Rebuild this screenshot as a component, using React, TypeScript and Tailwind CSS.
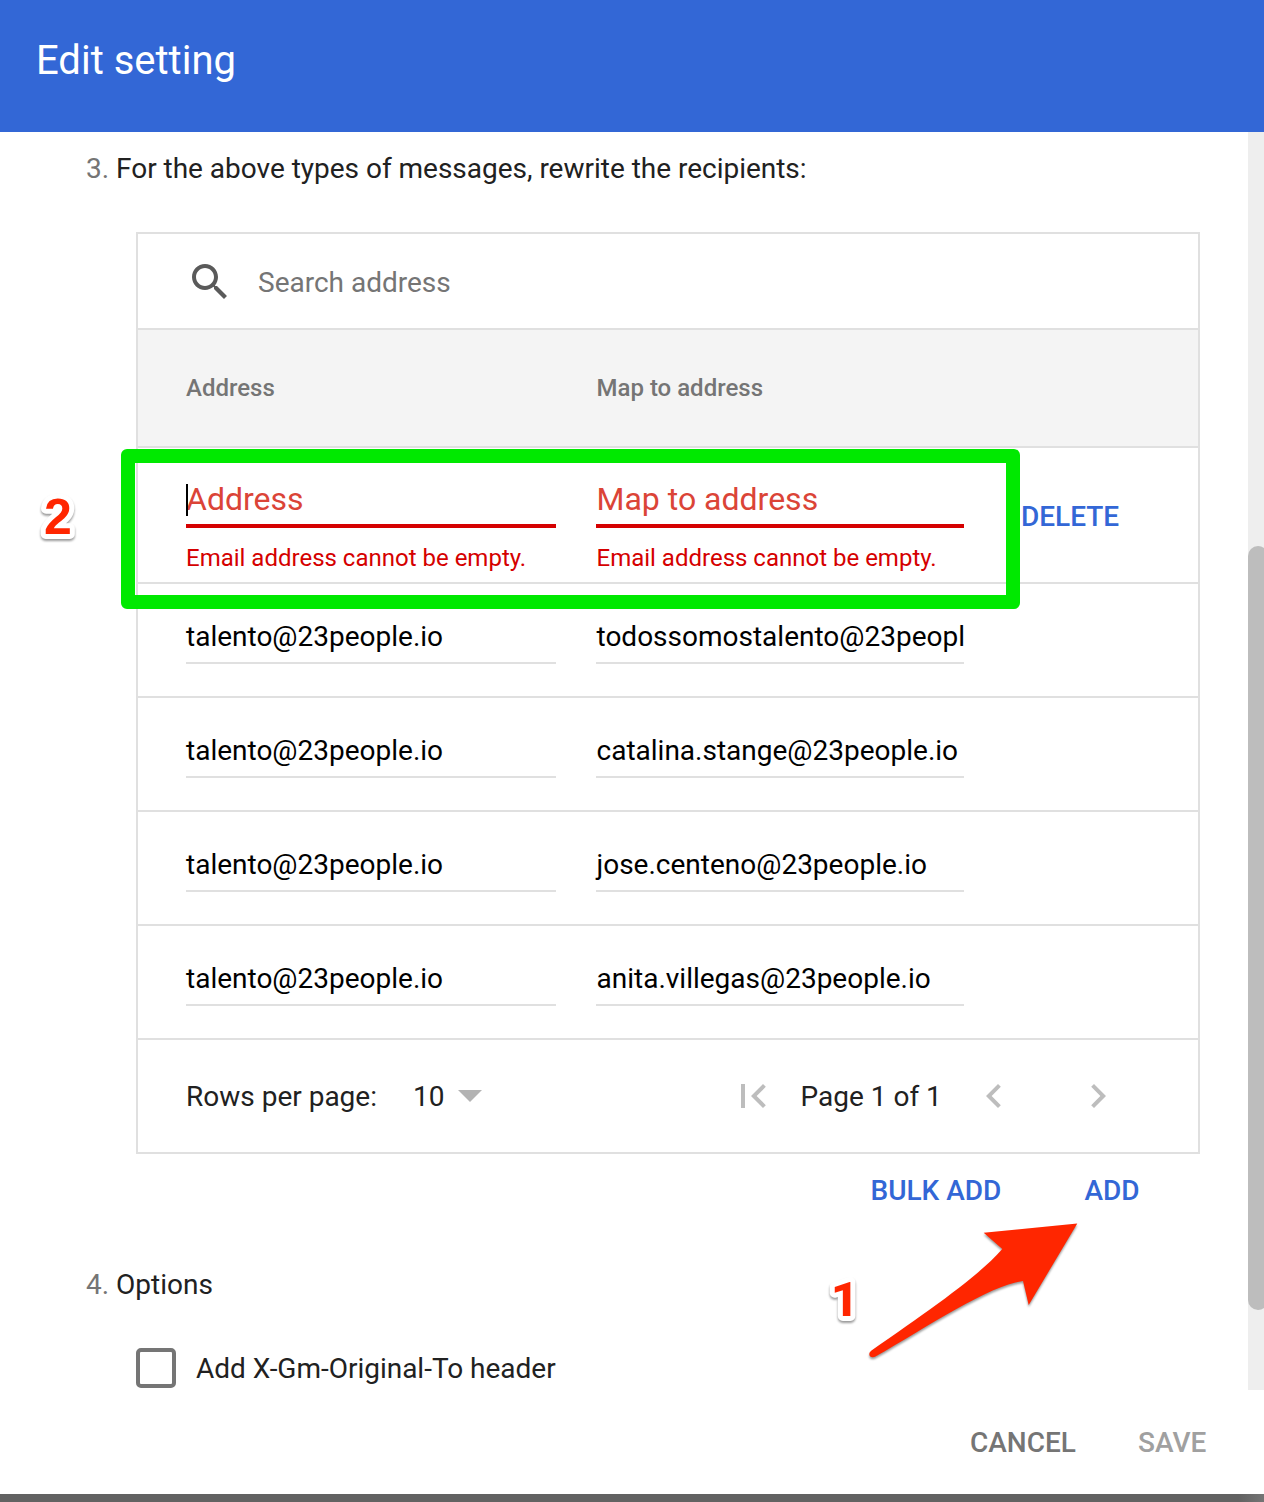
import React from "react";

const rows = [
  "todossomostalento@23peopl",
  "catalina.stange@23people.io",
  "jose.centeno@23people.io",
  "anita.villegas@23people.io",
];

function Icon({ d, className }: { d: string; className: string }) {
  return (
    <svg viewBox="0 0 24 24" className={`size-12 shrink-0 fill-current ${className}`}>
      <path d={d} />
    </svg>
  );
}

function Field({ value, className }: { value: string; className: string }) {
  return (
    <div className={`h-[80px] border-b-2 border-[#e0e0e0] pt-[33px] leading-10 text-black ${className}`}>
      {value}
    </div>
  );
}

function ErrorField({ label, caret, className }: { label: string; caret?: boolean; className: string }) {
  return (
    <div className={className}>
      <div className="relative h-20 border-b-4 border-[#d50000] pt-[31px] text-[32px] leading-10 text-[#db4437]">
        {caret && <span className="absolute top-9 left-0 h-8 w-0.5 bg-black" />}
        <span className={caret ? "" : "pl-[0.5px]"}>{label}</span>
      </div>
      <div className="pt-[14px] text-2xl leading-8 text-[#d50000]">
        <span className={caret ? "" : "pl-[0.5px]"}>Email address cannot be empty.</span>
      </div>
    </div>
  );
}

function Marker({ text, className }: { text: string; className: string }) {
  return (
    <svg viewBox="0 0 60 60" className={`absolute size-[60px] drop-shadow-[0_2px_1px_rgba(0,0,0,0.4)] ${className}`}>
      <text
        x="30"
        y="48"
        textAnchor="middle"
        strokeLinejoin="round"
        className="fill-[#ff2600] stroke-white stroke-[10px] [paint-order:stroke_fill]"
      >
        {text}
      </text>
    </svg>
  );
}

export default function App() {
  return (
    <div className="relative flex h-[1502px] w-[1264px] flex-col overflow-hidden bg-white font-['Roboto',sans-serif] text-[28px] whitespace-nowrap text-[#212121]">
      <header className="h-[132px] shrink-0 bg-[#3367d6] pt-[37px] pl-9 text-[40px] leading-[48px] text-white">Edit setting</header>

      <div className="flex h-[1258px] shrink-0">
        <main className="w-[1248px] shrink-0">
          <div className="flex h-[100px] pt-[17px] pl-[86px] leading-10">
            <span className="w-[30px] text-[#757575]">3.</span>
            <span className="tracking-[-0.015px]">For the above types of messages, rewrite the recipients:</span>
          </div>

          <section className="ml-[136px] w-[1064px] border-2 border-[#e0e0e0]">
            <div className="flex h-24 border-b-2 border-[#e0e0e0] pt-6 pl-12">
              <Icon
                className="text-[#5a5a5a]"
                d="M15.5 14h-.79l-.28-.27C15.41 12.59 16 11.11 16 9.5 16 5.91 13.09 3 9.5 3S3 5.91 3 9.5 5.91 16 9.5 16c1.61 0 3.09-.59 4.23-1.57l.27.28v.79l5 4.99L20.49 19l-4.99-5zm-6 0C7.01 14 5 11.99 5 9.5S7.01 5 9.5 5 14 7.01 14 9.5 11.99 14 9.5 14z"
              />
              <span className="pt-[5px] pl-6 leading-10 text-[#757575]">Search address</span>
            </div>

            <div className="flex h-[118px] items-center border-b-2 border-[#e0e0e0] bg-[#f4f4f4] pl-12 text-2xl font-medium text-[#757575]">
              <span className="w-[410.5px]">Address</span>
              <span>Map to address</span>
            </div>

            <div className="flex h-[136px] border-b-2 border-[#e0e0e0] pl-12">
              <ErrorField label="Address" caret className="w-[370px]" />
              <ErrorField label="Map to address" className="ml-10 w-[368px]" />
              <button className="ml-[57px] h-[136px] pt-0.5 leading-10 font-medium text-[#3367d6]">DELETE</button>
            </div>

            {rows.map((r) => (
              <div key={r} className="flex h-[114px] border-b-2 border-[#e0e0e0] pl-12">
                <Field value="talento@23people.io" className="w-[370px]" />
                <Field value={r} className="ml-10 w-[368px] pl-[0.5px]" />
              </div>
            ))}

            <div className="flex h-28 items-center pl-12">
              <span className="w-[227px] pt-0.5">Rows per page:</span>
              <span className="w-[45px] pt-0.5">10</span>
              <svg viewBox="0 0 24 12" className="h-3 w-6 fill-[#b3b3b3]">
                <path d="M0 0h24L12 12z" />
              </svg>
              <Icon className="ml-[246.5px] text-[#bdbdbd]" d="M18.41 16.59L13.82 12l4.59-4.59L17 6l-6 6 6 6zM6 6h2v12H6z" />
              <span className="ml-6 w-[169.5px] pt-0.5">Page 1 of 1</span>
              <Icon className="text-[#bdbdbd]" d="M15.41 7.41L14 6l-6 6 6 6 1.41-1.41L10.83 12z" />
              <Icon className="ml-14 text-[#bdbdbd]" d="M10 6L8.59 7.41 13.17 12l-4.58 4.59L10 18l6-6z" />
            </div>
          </section>

          <div className="flex h-[94px] pt-[17px] pl-[870.5px] leading-10 font-medium text-[#3367d6]">
            <button className="h-10 w-[214px] text-left">BULK ADD</button>
            <button className="h-10">ADD</button>
          </div>

          <div className="flex h-[100px] pt-[17px] pl-[86px] leading-10">
            <span className="w-[30px] text-[#757575]">4.</span>
            <span>Options</span>
          </div>
          <label className="flex pl-[136px] leading-10">
            <span className="size-10 rounded-[5px] border-4 border-[#757575]" />
            <span className="pt-px pl-5 tracking-[-0.015px]">Add X-Gm-Original-To header</span>
          </label>
        </main>

        <div className="w-4 overflow-hidden bg-[#eeeeee] pt-[414px]">
          <div className="h-[764px] w-5 rounded-full bg-[#bdbdbd]" />
        </div>
      </div>

      <footer className="flex h-[104px] shrink-0 pt-[33px] pl-[970px] leading-10 font-medium">
        <button className="h-10 w-[168px] text-left text-[#757575]">CANCEL</button>
        <button className="h-10 text-[#a0a0a0]">SAVE</button>
      </footer>
      <div className="h-2 shrink-0 bg-linear-to-r from-[#626262] from-98% to-[#757575]" />

      <div className="absolute top-[449px] left-[121px] h-[160px] w-[899px] rounded-[6px] border-14 border-[#00e900]" />
      <Marker text="2" className="top-[485.5px] left-[27.5px] font-['Liberation_Sans',sans-serif] text-[50px] font-bold" />
      <Marker text="1" className="top-[1268px] left-[815px] font-['Roboto',sans-serif] text-[49px] font-extrabold" />
      <svg viewBox="860 1215 230 155" className="absolute top-[1215px] left-[860px] h-[155px] w-[230px] fill-[#ff2600] drop-shadow-[0_2px_1px_rgba(0,0,0,0.4)]">
        <path d="M1077.3 1223.5L983.7 1232.8L1002.3 1249C980 1275 930 1310 871.5 1350.5C867 1354 870 1358.500 875 1356.800C930 1325 990 1285 1023 1281L1028.700 1305Z" />
      </svg>
    </div>
  );
}
